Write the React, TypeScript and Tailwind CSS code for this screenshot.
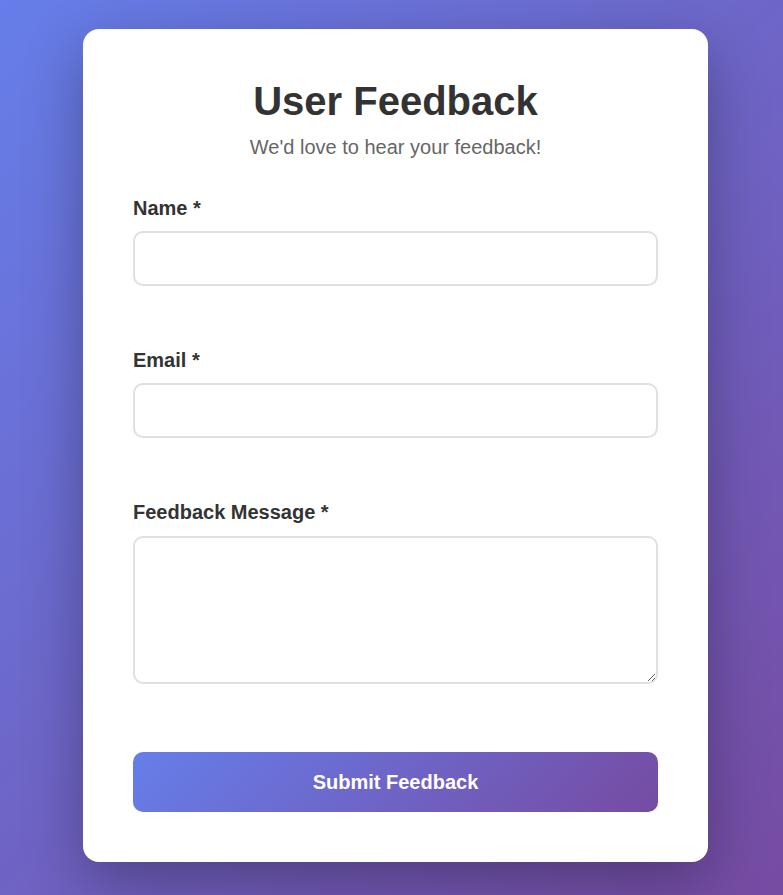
import React from "react";

export default function App() {
  return (
    <div
      className="w-full min-h-[895px] bg-[linear-gradient(135deg,#667eea_0%,#764ba2_100%)] pt-[29px] pl-[83px] pb-[33px]"
      style={{ fontFamily: '"Liberation Sans", Arial, sans-serif' }}
    >
      <div className="w-[625px] h-[833px] bg-white rounded-[16px] shadow-[0_20px_60px_rgba(0,0,0,0.3)] px-[50px] pt-[49px] pb-[50px] flex flex-col">
        <h1 className="text-center text-[40px] leading-[46px] font-bold text-[#333] mb-[12px]">User Feedback</h1>
        <p className="text-center text-[20px] leading-[23px] text-[#666] mb-[38px]">We'd love to hear your feedback!</p>

        <label className="block text-[20px] leading-[23px] font-bold text-[#333] mb-[11px]">Name *</label>
        <input
          type="text"
          className="block w-full h-[55px] border-2 border-[#e0e0e0] rounded-[10px] px-[15px] text-[16px] outline-none mb-[63px]"
        />

        <label className="block text-[20px] leading-[23px] font-bold text-[#333] mb-[11px]">Email *</label>
        <input
          type="email"
          className="block w-full h-[55px] border-2 border-[#e0e0e0] rounded-[10px] px-[15px] text-[16px] outline-none mb-[63px]"
        />

        <label className="block text-[20px] leading-[23px] font-bold text-[#333] mb-[12px]">Feedback Message *</label>
        <textarea className="block w-full h-[148px] border-2 border-[#e0e0e0] rounded-[10px] px-[15px] py-[12px] text-[16px] outline-none mb-[68px]" />

        <button className="w-full h-[60px] rounded-[10px] bg-[linear-gradient(135deg,#667eea_0%,#764ba2_100%)] text-white text-[20px] font-bold">
          Submit Feedback
        </button>
      </div>
    </div>
  );
}
